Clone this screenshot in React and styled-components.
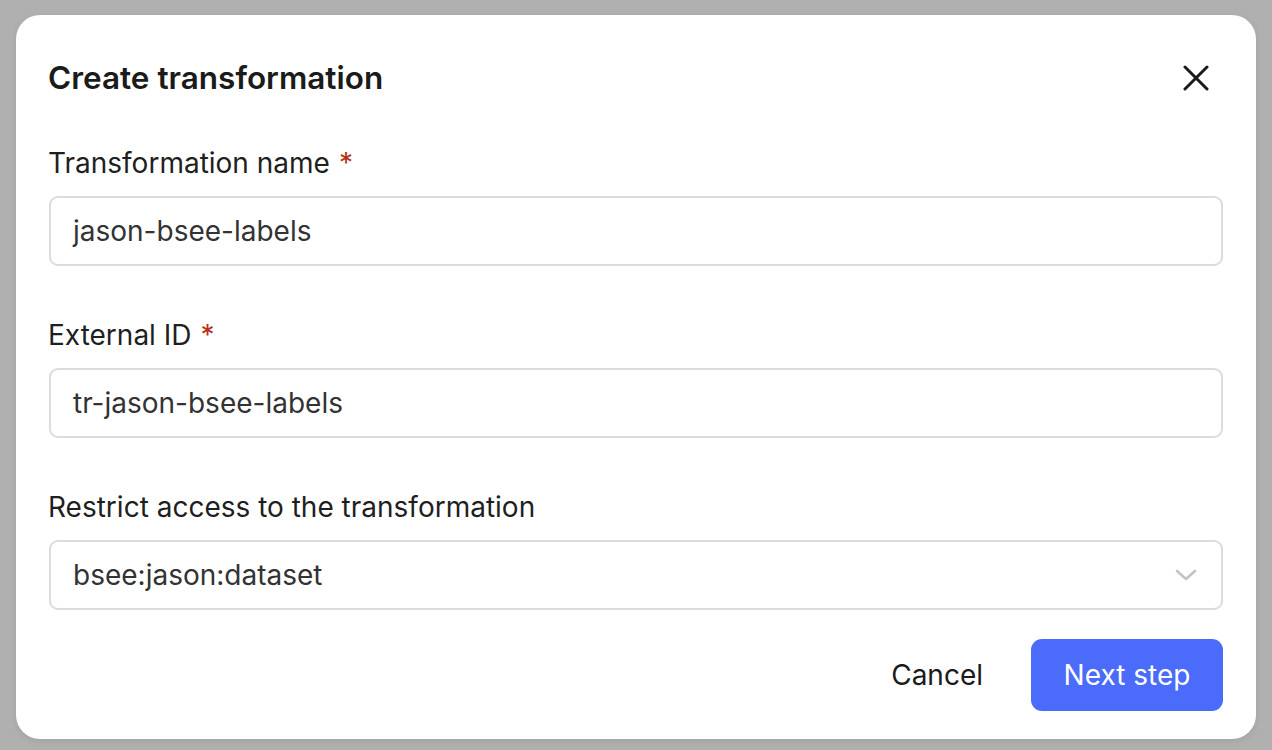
import React from "react";
import styled, { createGlobalStyle } from "styled-components";

const Global = createGlobalStyle`
  html, body { margin: 0; padding: 0; background: #b0b0b1; }
  body { font-family: Inter, "Noto Sans", sans-serif; -webkit-font-smoothing: antialiased; }
  * { box-sizing: border-box; }
`;

const Page = styled.div`
  padding: 15px 16px 11px 16px;
`;

const Dialog = styled.div`
  background: #ffffff;
  border-radius: 24px;
  padding: 39px 33px 28px 33px;
  display: flex;
  flex-direction: column;
  box-shadow: 0 2px 6px rgba(0,0,0,0.08);
`;

const Header = styled.div`
  height: 48px;
  display: flex;
  align-items: center;
  justify-content: space-between;
`;

const Title = styled.h1`
  margin: 0 0 0 -1px;
  font-size: 31.5px;
  line-height: 48px;
  font-weight: 600;
  color: #1b1b1b;
`;

const CloseButton = styled.button`
  border: none;
  background: transparent;
  padding: 0;
  margin-right: 12px;
  width: 30px;
  height: 30px;
  display: flex;
  align-items: center;
  justify-content: center;
  cursor: pointer;
`;

const Fields = styled.div`
  display: flex;
  flex-direction: column;
  gap: 51px;
  margin-top: 43px;
`;

const Field = styled.div`
  display: flex;
  flex-direction: column;
  gap: 15px;
`;

const Label = styled.label`
  margin-left: -1px;
  font-size: 28px;
  line-height: 36px;
  color: #1f1f1f;
  font-weight: 400;
`;

const Required = styled.span`
  color: #b6321c;
  margin-left: 9px;
`;

const InputBox = styled.div`
  height: 70px;
  border: 2px solid #dcdcdc;
  border-radius: 9px;
  display: flex;
  align-items: center;
  justify-content: space-between;
  padding: 0 24px 0 22px;
  font-size: 28px;
  color: #333333;
`;

const Footer = styled.div`
  display: flex;
  justify-content: flex-end;
  align-items: center;
  gap: 16px;
  margin-top: 29px;
`;

const Button = styled.button`
  height: 72px;
  border: none;
  border-radius: 11px;
  font-family: inherit;
  font-size: 28px;
  padding: 0 32px;
  cursor: pointer;
  background: ${(p) => (p.$primary ? "#4b6bfb" : "transparent")};
  color: ${(p) => (p.$primary ? "#ffffff" : "#1b1b1b")};
  min-width: ${(p) => (p.$primary ? "192px" : "auto")};
`;

const Chevron = () => (
  <svg width="22" height="12" viewBox="0 0 22 12" fill="none">
    <path d="M2 2l9 8 9-8" stroke="#c4c4c4" strokeWidth="2.6" strokeLinecap="round" strokeLinejoin="round" />
  </svg>
);

export default function App() {
  return (
    <Page>
      <Global />
      <Dialog>
        <Header>
          <Title>Create transformation</Title>
          <CloseButton aria-label="Close">
            <svg width="26" height="26" viewBox="0 0 26 26" fill="none">
              <path d="M2 2l22 22M24 2L2 24" stroke="#1b1b1b" strokeWidth="3" strokeLinecap="round" />
            </svg>
          </CloseButton>
        </Header>
        <Fields>
          <Field>
            <Label>
              Transformation name<Required>*</Required>
            </Label>
            <InputBox>jason-bsee-labels</InputBox>
          </Field>
          <Field>
            <Label>
              External ID<Required>*</Required>
            </Label>
            <InputBox>tr-jason-bsee-labels</InputBox>
          </Field>
          <Field>
            <Label>Restrict access to the transformation</Label>
            <InputBox>
              <span>bsee:jason:dataset</span>
              <Chevron />
            </InputBox>
          </Field>
        </Fields>
        <Footer>
          <Button>Cancel</Button>
          <Button $primary>Next step</Button>
        </Footer>
      </Dialog>
    </Page>
  );
}
